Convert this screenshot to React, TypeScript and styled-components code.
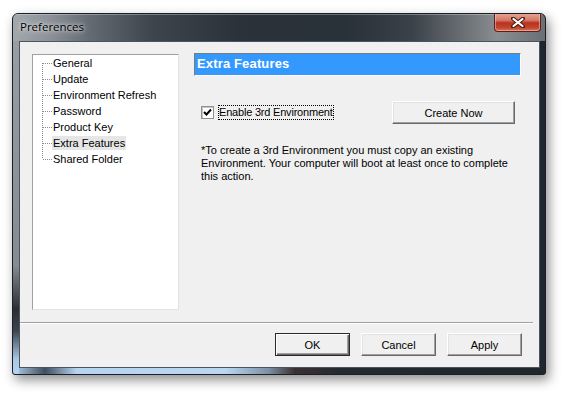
import React from "react";
import styled, { createGlobalStyle, css } from "styled-components";

const GlobalStyle = createGlobalStyle`
  html, body { margin: 0; padding: 0; background: #ffffff; }
  body { font-family: "Liberation Sans", Arial, sans-serif; }
  #root { width: 567px; height: 395px; overflow: hidden; }
`;

const Page = styled.div`
  padding: 13px 0 0 12px;
  width: 567px;
  height: 395px;
  box-sizing: border-box;
`;

const Window = styled.div`
  width: 534px;
  height: 362px;
  box-sizing: border-box;
  border: 1px solid #1c1f23;
  border-radius: 6px 6px 3px 3px;
  display: flex;
  flex-direction: column;
  overflow: hidden;
  box-shadow: 3px 5px 12px rgba(0, 0, 0, 0.45);
  background-color: #2a3139;
  background-image:
    linear-gradient(180deg, #9aa0a5 0%, #858b91 70%, #2a2c30 82%, #3c4450 88%, #a9c8e8 96%, #b6d4f1 100%),
    linear-gradient(90deg, #b4d3f1 0%, #3f4e5e 6%, #b6d5f3 12%, #b9d6f2 40%, #7d90a4 48%, #3a3033 53%, #232a31 62%, #1f262d 100%);
  background-size: 6px 100%, 100% 100%;
  background-position: left top, left top;
  background-repeat: no-repeat;
`;

const TitleBar = styled.div`
  height: 27px;
  flex: none;
  display: flex;
  align-items: flex-start;
  justify-content: space-between;
  background-color: #2d343c;
  background-image: linear-gradient(90deg, #a3a8ac 0%, #8b9197 7%, #656c73 14%, #3e454d 26%, #2b323a 42%, #283038 62%, #3a4148 75%, #6c7176 85%, #8a8e92 91%, #6a6f75 100%);
  box-shadow: inset 0 1px 0 rgba(255, 255, 255, 0.3);
`;

const TitleText = styled.span`
  font-family: "Open Sans", "Noto Sans", sans-serif;
  font-size: 11.5px;
  color: #000;
  margin: 5px 0 0 7px;
  line-height: 16px;
  text-shadow: 0 0 6px rgba(255, 255, 255, 0.9), 0 0 3px rgba(255, 255, 255, 0.7);
`;

const CloseButton = styled.div`
  width: 47px;
  height: 19px;
  margin: -1px 4px 0 0;
  box-sizing: border-box;
  border: 1px solid #5a2018;
  border-top: none;
  border-radius: 0 0 4px 4px;
  background: linear-gradient(180deg, #e7a99a 0%, #d47a66 40%, #b8321f 55%, #c2442e 80%, #d9735c 100%);
  box-shadow: inset 0 0 0 1px rgba(255, 210, 200, 0.5);
  display: flex;
  align-items: center;
  justify-content: center;
`;

const FrameBody = styled.div`
  flex: 1;
  padding: 0 5px 6px 6px;
  display: flex;
`;

const Client = styled.div`
  flex: 1;
  border: 1px solid #4b5560;
  background: #f0f0f0;
  display: flex;
  flex-direction: column;
`;

const Body = styled.div`
  height: 268px;
  box-sizing: border-box;
  padding: 12px 0 0 12px;
  display: flex;
  gap: 15px;
`;

const TreeBox = styled.div`
  width: 147px;
  height: 256px;
  box-sizing: border-box;
  background: #fff;
  border: 1px solid;
  border-color: #a0a0a0 #e3e3e3 #e3e3e3 #a0a0a0;
  padding: 0 0 0 9px;
  display: flex;
  flex-direction: column;
`;

const TreeRow = styled.div`
  height: 16px;
  display: flex;
  align-items: center;
`;

const TreeLabel = styled.span<{ $selected?: boolean }>`
  font-size: 11px;
  line-height: 14px;
  color: #000;
  padding: 0 1px;
  white-space: nowrap;
  background: ${(p) => (p.$selected ? "#e6e6e6" : "transparent")};
`;

const RightPanel = styled.div`
  width: 327px;
  margin-top: -1px;
  display: flex;
  flex-direction: column;
`;

const HeaderBar = styled.div`
  height: 23px;
  box-sizing: border-box;
  background: #3399ff;
  border: 1px solid;
  border-color: #7a7a7a #ffffff #ffffff #7a7a7a;
  color: #fff;
  font-weight: bold;
  font-size: 13px;
  line-height: 20px;
  padding-left: 2px;
  letter-spacing: 0.15px;
`;

const OptionRow = styled.div`
  margin-top: 25px;
  padding: 0 6px 0 7px;
  display: flex;
  align-items: center;
  justify-content: space-between;
`;

const CheckLabel = styled.label`
  display: flex;
  align-items: center;
  gap: 4px;
`;

const CheckBox = styled.span`
  width: 13px;
  height: 13px;
  box-sizing: border-box;
  border: 1px solid #8e8f8f;
  background: #fff;
  box-shadow: inset 1px 1px 0 #c8c8c8;
  display: flex;
  align-items: center;
  justify-content: center;
`;

const FocusText = styled.span`
  font-size: 11px;
  line-height: 13px;
  border: 1px dotted #000;
  color: #000;
  white-space: nowrap;
  letter-spacing: -0.2px;
`;

const Button = styled.button<{ $default?: boolean; $width?: number }>`
  width: ${(p) => p.$width ?? 75}px;
  height: 23px;
  box-sizing: border-box;
  padding: 0;
  font-family: "Liberation Sans", Arial, sans-serif;
  font-size: 11px;
  color: #000;
  background: #f0f0f0;
  border: 1px solid;
  border-color: #ffffff #696969 #696969 #ffffff;
  box-shadow: inset -1px -1px 0 #a0a0a0, inset 1px 1px 0 #e3e3e3;
  ${(p) =>
    p.$default &&
    css`
      border: 1px solid #2a2a2a;
      box-shadow: inset 1px 1px 0 #ffffff, inset -1px -1px 0 #696969, inset -2px -2px 0 #a0a0a0;
    `}
`;

const Note = styled.p`
  margin: 20px 0 0 7px;
  font-size: 11px;
  line-height: 13px;
  color: #000;
`;

const Separator = styled.div`
  margin: 12px 6px 0 0;
  height: 0;
  border-top: 1px solid #a0a0a0;
  border-bottom: 1px solid #ffffff;
`;

const Footer = styled.div`
  padding: 9px 17px 11px 0;
  display: flex;
  justify-content: flex-end;
  gap: 11px;
`;

const treeItems = [
  "General",
  "Update",
  "Environment Refresh",
  "Password",
  "Product Key",
  "Extra Features",
  "Shared Folder",
];

function Connector({ first, last }: { first: boolean; last: boolean }) {
  const y1 = first ? 8 : 0;
  const y2 = last ? 8 : 16;
  return (
    <svg width="10" height="16" viewBox="0 0 10 16" style={{ flex: "none" }}>
      <line x1="0.5" y1={y1} x2="0.5" y2={y2} stroke="#8a8a8a" strokeDasharray="1 1" />
      <line x1="1" y1="8.5" x2="10" y2="8.5" stroke="#8a8a8a" strokeDasharray="1 1" />
    </svg>
  );
}

export default function App() {
  return (
    <>
      <GlobalStyle />
      <Page>
        <Window>
          <TitleBar>
            <TitleText>Preferences</TitleText>
            <CloseButton>
              <svg width="14" height="11" viewBox="0 0 14 11">
                <path
                  d="M2 1.5 L12 9.5 M12 1.5 L2 9.5"
                  stroke="#4a1a12"
                  strokeWidth="4"
                  strokeLinecap="round"
                />
                <path
                  d="M2.5 2 L11.5 9 M11.5 2 L2.5 9"
                  stroke="#ffffff"
                  strokeWidth="2.2"
                  strokeLinecap="round"
                />
              </svg>
            </CloseButton>
          </TitleBar>
          <FrameBody>
            <Client>
              <Body>
                <TreeBox>
                  {treeItems.map((item, i) => (
                    <TreeRow key={item}>
                      <Connector first={i === 0} last={i === treeItems.length - 1} />
                      <TreeLabel $selected={item === "Extra Features"}>{item}</TreeLabel>
                    </TreeRow>
                  ))}
                </TreeBox>
                <RightPanel>
                  <HeaderBar>Extra Features</HeaderBar>
                  <OptionRow>
                    <CheckLabel>
                      <CheckBox>
                        <svg width="9" height="9" viewBox="0 0 9 9">
                          <path d="M1 4 L3.5 6.5 L8 1.5" stroke="#000" strokeWidth="2" fill="none" />
                        </svg>
                      </CheckBox>
                      <FocusText>Enable 3rd Environment</FocusText>
                    </CheckLabel>
                    <Button $width={123}>Create Now</Button>
                  </OptionRow>
                  <Note>
                    *To create a 3rd Environment you must copy an existing
                    <br />
                    Environment. Your computer will boot at least once to complete
                    <br />
                    this action.
                  </Note>
                </RightPanel>
              </Body>
              <Separator />
              <Footer>
                <Button $default>OK</Button>
                <Button>Cancel</Button>
                <Button>Apply</Button>
              </Footer>
            </Client>
          </FrameBody>
        </Window>
      </Page>
    </>
  );
}
